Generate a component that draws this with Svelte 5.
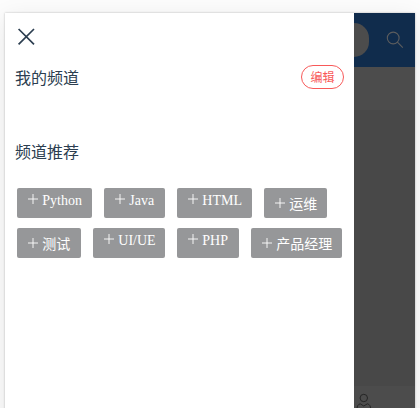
<script>
  const rows = [
    [
      { label: 'Python', width: 75 },
      { label: 'Java', width: 61 },
      { label: 'HTML', width: 75 },
      { label: '运维', width: 63, cjk: true }
    ],
    [
      { label: '测试', width: 64, cjk: true },
      { label: 'UI/UE', width: 72 },
      { label: 'PHP', width: 62 },
      { label: '产品经理', width: 91, cjk: true }
    ]
  ];
</script>

<div class="stage">
  <div class="phone">
    <section class="drawer">
      <button class="close" aria-label="关闭">
        <svg width="18" height="18" viewBox="0 0 18 18"><path d="M1.6 1 17 16.4M17 1 1.6 16.4" /></svg>
      </button>
      <div class="heading mine">
        <span>我的频道</span>
        <button class="edit">编辑</button>
      </div>
      <div class="heading"><span>频道推荐</span></div>
      <div class="rows">
        {#each rows as row}
          <div class="row">
            {#each row as item}
              <button class="chip" class:cjk={item.cjk} style="width: {item.width}px">
                <svg width="12" height="12" viewBox="0 0 12 12"><path d="M6 1v10M1 6h10" /></svg>
                <span>{item.label}</span>
              </button>
            {/each}
          </div>
        {/each}
      </div>
    </section>
    <aside class="behind">
      <header>
        <i class="field"></i>
        <svg class="search" width="18" height="18" viewBox="0 0 18 18"><circle cx="7.2" cy="7" r="5.9" /><path d="m11.4 11.2 5.4 5.4" /></svg>
      </header>
      <div class="tabs"></div>
      <div class="content"></div>
      <footer>
        <svg width="16" height="20" viewBox="0 0 16 20"><circle cx="7.8" cy="5" r="3.7" /><path d="M4.2 10.8C2 11.4 1 13 1 16v3h13.6v-3c0-3-1-4.6-3.2-5.2L7.8 13z" /></svg>
      </footer>
    </aside>
  </div>
</div>

<style>
  :global(body) { margin: 0; overflow: hidden; }
  .stage {
    box-sizing: border-box;
    width: 420px;
    height: 408px;
    padding: 13px 5px 0;
    overflow: hidden;
    background: #fcfcfc;
    font-family: 'Liberation Serif', 'Noto Sans CJK SC', serif;
    color: #2c3e50;
  }
  .phone {
    display: flex;
    width: 410px;
    height: 440px;
    box-shadow: 0 0 2px rgba(0, 0, 0, .25), 0 6px 24px rgba(0, 0, 0, .09);
  }
  button {
    box-sizing: border-box;
    margin: 0;
    padding: 0;
    border: 0;
    background: none;
    font: inherit;
    color: inherit;
  }
  svg { display: block; flex: none; fill: none; stroke: currentColor; }
  .drawer { width: 349px; background: #fff; }
  .close { display: block; padding: 15px 0 0 12px; height: 33px; }
  .close svg { stroke-width: 1.7; }
  .heading {
    display: flex;
    align-items: center;
    justify-content: space-between;
    height: 24px;
    padding: 0 10px;
    font-size: 16px;
    line-height: 24px;
  }
  .heading span { padding-top: 4px; }
  .mine { margin: 19px 0 50px; }
  .edit {
    width: 43px;
    height: 24px;
    padding-top: 1px;
    border: 1px solid #f85959;
    border-radius: 12px;
    color: #f85959;
    font-size: 12px;
    line-height: 22px;
  }
  .rows { display: flex; flex-direction: column; gap: 10px; padding: 25px 0 0 12px; }
  .row { display: flex; gap: 12px; }
  .chip {
    display: flex;
    align-items: flex-start;
    gap: 3.3px;
    height: 30px;
    padding: 5px 0 0 10px;
    border-radius: 2px;
    background: #969799;
    color: #fff;
    font-size: 14px;
    line-height: 16px;
    white-space: nowrap;
  }
  .chip svg { stroke-width: .9; }
  .cjk { padding-top: 9px; }
  .behind { display: flex; flex-direction: column; flex: 1; background: #484848; }
  header, .tabs, .content, footer { flex: none; }
  header {
    display: flex;
    align-items: center;
    height: 54px;
    background: #102c4c;
    color: #5c5d5e;
  }
  .field { width: 15px; height: 34px; border-radius: 0 17px 17px 0; background: #4c4c4c; }
  .search { margin-left: 16.7px; stroke-width: 1.1; }
  .tabs { height: 43px; background: #4c4c4c; }
  .content { height: 276px; background: #484848; }
  footer { height: 54px; padding: 7px 0 0 2px; box-sizing: border-box; background: #4c4c4c; color: #252525; }
</style>
